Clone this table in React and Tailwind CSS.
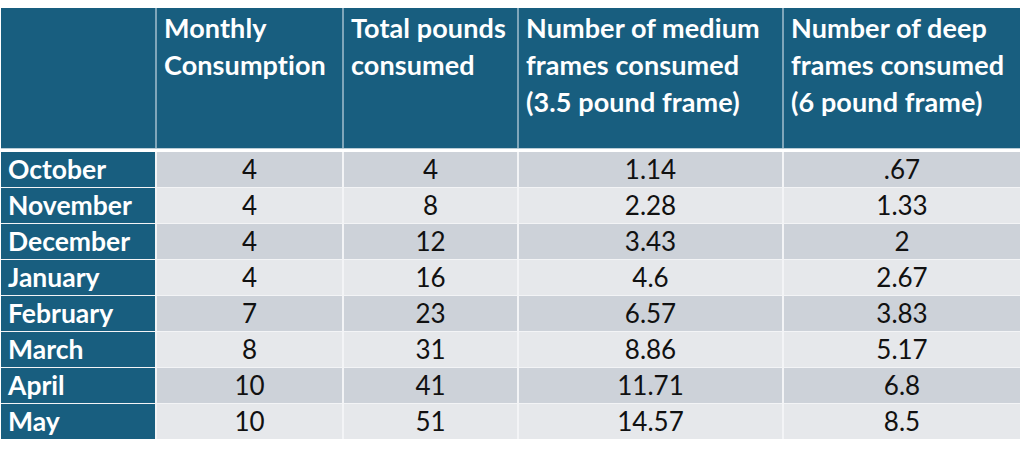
import React from "react";

const rows = [
  ["October", "4", "4", "1.14", ".67"],
  ["November", "4", "8", "2.28", "1.33"],
  ["December", "4", "12", "3.43", "2"],
  ["January", "4", "16", "4.6", "2.67"],
  ["February", "7", "23", "6.57", "3.83"],
  ["March", "8", "31", "8.86", "5.17"],
  ["April", "10", "41", "11.71", "6.8"],
  ["May", "10", "51", "14.57", "8.5"],
];

const headers = [
  [],
  ["Monthly", "Consumption"],
  ["Total pounds", "consumed"],
  ["Number of medium", "frames consumed", "(3.5 pound frame)"],
  ["Number of deep", "frames consumed", "(6 pound frame)"],
];

const cols = "grid grid-cols-[154px_185px_173px_263px_236px] gap-x-[2px]";

export default function App() {
  return (
    <div
      className="w-[1023px] h-[460px] bg-white pt-[8px] pl-[1px]"
      style={{ fontFamily: "Lato, 'Open Sans', sans-serif" }}
    >
      <div className="w-[1019px]">
        <div className={`${cols} bg-[#7fa6ba] h-[140px]`}>
          {headers.map((h, i) => (
            <div
              key={i}
              className="bg-[#185e7f] text-white font-bold text-[27px] leading-[37px] pl-[7px] pr-[2px] pt-[1px] whitespace-nowrap tracking-[0.1px]"
            >
              {h.map((line, li) => (
                <div key={li}>{line}</div>
              ))}
            </div>
          ))}
        </div>
        <div className="h-[1px] bg-[#b9cdd7]" />
        <div className="h-[3px] bg-white" />
        <div className={`${cols} gap-y-[1px] bg-[#f3f4f6]`}>
          {rows.map((r, ri) =>
            r.map((c, ci) =>
              ci === 0 ? (
                <div
                  key={`${ri}-${ci}`}
                  className="bg-[#185e7f] text-white font-bold text-[26.5px] h-[35px] leading-[35px] pl-[7px]"
                >
                  {c}
                </div>
              ) : (
                <div
                  key={`${ri}-${ci}`}
                  className={`${
                    ri % 2 === 0 ? "bg-[#cdd2d9]" : "bg-[#e6e8eb]"
                  } text-[#111111] text-[26px] h-[35px] leading-[35px] text-center`}
                >
                  {c}
                </div>
              )
            )
          )}
        </div>
      </div>
    </div>
  );
}
